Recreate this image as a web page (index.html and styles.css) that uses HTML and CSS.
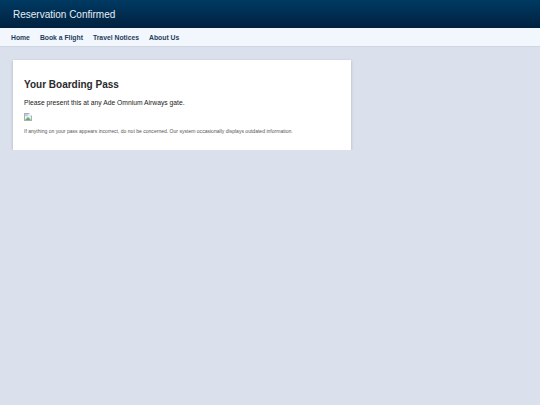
FILE: index.html
```html
<!DOCTYPE html>
<html lang="en">
<head>
  <meta charset="UTF-8">
  <meta name="viewport" content="width=device-width, initial-scale=1.0">
  <title>Reservation Confirmed</title>
  <link rel="stylesheet" href="styles.css">
</head>
<body>

  <header>
    <h1>Reservation Confirmed</h1>
  </header>

  <nav>
    <a href="#">Home</a>
    <a href="#">Book a Flight</a>
    <a href="#">Travel Notices</a>
    <a href="#">About Us</a>
  </nav>

  <main class="card">
    <h2>Your Boarding Pass</h2>
    <p class="lead">Please present this at any Ade Omnium Airways gate.</p>
    <svg class="broken-img" width="8" height="8" viewBox="0 0 8 8" role="img" aria-label="Boarding pass">
      <rect x="0.5" y="0.5" width="7" height="7" fill="#e8edf2" stroke="#a9b0b8"/>
      <rect x="1" y="1" width="3" height="2" fill="#b9cdea"/>
      <path d="M1 7 L4 4 L7 7 Z" fill="#5fb35a"/>
      <path d="M5 0 L8 0 L8 3 Z" fill="#fff"/>
    </svg>
    <p class="note">If anything on your pass appears incorrect, do not be concerned. Our system occasionally displays outdated information.</p>
  </main>

</body>
</html>
```

FILE: styles.css
```css
body {
  margin: 0;
  font-family: "Liberation Sans", Arial, sans-serif;
  background-color: #dae1ec;
  color: #222;
}

header {
  height: 28px;
  display: flex;
  align-items: center;
  padding-left: 13px;
  background: linear-gradient(to bottom, #003a63, #00213f);
  box-shadow: 0 1px 1px rgba(0, 0, 0, 0.3);
}

header h1 {
  margin: 0;
  font-size: 10px;
  font-weight: normal;
  color: #e6edf3;
}

nav {
  height: 19px;
  display: flex;
  align-items: center;
  gap: 10px;
  padding-left: 11px;
  background-color: #f2f6fd;
  border-bottom: 1px solid #cfd6e0;
  box-sizing: border-box;
}

nav a {
  font-size: 6.8px;
  font-weight: bold;
  color: #1f3d5c;
  text-decoration: none;
}

.card {
  width: 316px;
  height: 68px;
  margin: 13px 0 0 13px;
  padding: 11px;
  background-color: #fff;
  box-shadow: 0 1px 3px rgba(0, 0, 0, 0.2);
}

.card h2 {
  margin: 8px 0 9px;
  font-size: 10px;
  color: #2a2a2a;
}

.lead {
  margin: 0 0 7px;
  font-size: 6.75px;
}

.broken-img {
  display: block;
}

.note {
  margin: 7px 0 0;
  font-size: 5.06px;
  color: #555;
}
```
